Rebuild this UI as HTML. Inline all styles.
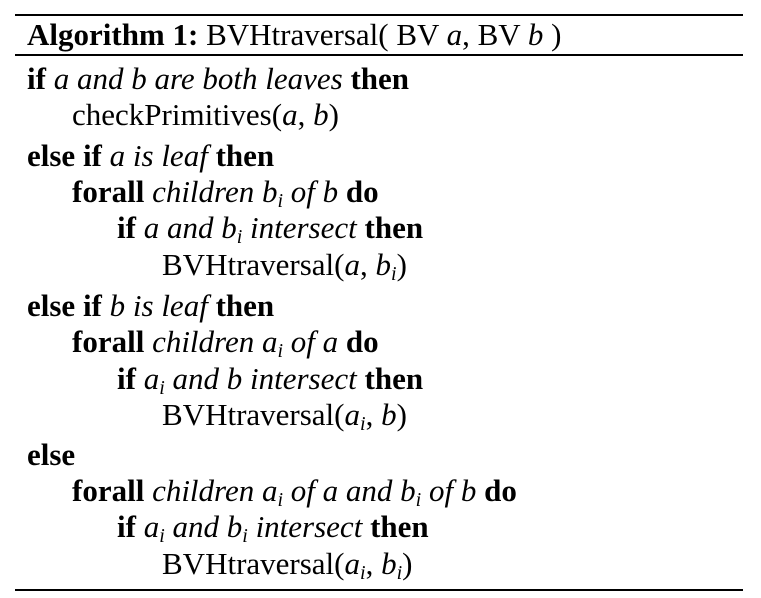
<html><head><style>
body{margin:0;background:#fff;width:761px;height:598px;position:relative;overflow:hidden;font-family:"Liberation Serif",serif;font-size:31px;color:#000}
.r{position:absolute;left:15px;width:728px;background:#000}
.l{position:absolute;line-height:30px;white-space:nowrap}
i{font-style:italic}
sub{font-size:20px;font-style:italic;vertical-align:-5px;line-height:0}
</style></head><body>
<div class="r" style="top:14px;height:2px"></div>
<div class="r" style="top:54px;height:2px"></div>
<div class="r" style="top:589px;height:2px"></div>
<div class="l" style="left:27px;top:20px"><b>Algorithm 1:</b> BVHtraversal( BV <i>a</i>, BV <i>b</i> )</div>
<div class="l" style="left:27px;top:64px"><b>if</b> <i>a and b are both leaves</i> <b>then</b></div>
<div class="l" style="left:72px;top:100px">checkPrimitives(<i>a</i>, <i>b</i>)</div>
<div class="l" style="left:27px;top:141px"><b>else if</b> <i>a is leaf</i> <b>then</b></div>
<div class="l" style="left:72px;top:177px"><b>forall</b> <i>children b<sub>i</sub> of b</i> <b>do</b></div>
<div class="l" style="left:117px;top:213px"><b>if</b> <i>a and b<sub>i</sub> intersect</i> <b>then</b></div>
<div class="l" style="left:162px;top:250px">BVHtraversal(<i>a</i>, <i>b<sub>i</sub></i>)</div>
<div class="l" style="left:27px;top:291px"><b>else if</b> <i>b is leaf</i> <b>then</b></div>
<div class="l" style="left:72px;top:327px"><b>forall</b> <i>children a<sub>i</sub> of a</i> <b>do</b></div>
<div class="l" style="left:117px;top:364px"><b>if</b> <i>a<sub>i</sub> and b intersect</i> <b>then</b></div>
<div class="l" style="left:162px;top:400px">BVHtraversal(<i>a<sub>i</sub></i>, <i>b</i>)</div>
<div class="l" style="left:27px;top:440px"><b>else</b></div>
<div class="l" style="left:72px;top:476px"><b>forall</b> <i>children a<sub>i</sub> of a and b<sub>i</sub> of b</i> <b>do</b></div>
<div class="l" style="left:117px;top:512px"><b>if</b> <i>a<sub>i</sub> and b<sub>i</sub> intersect</i> <b>then</b></div>
<div class="l" style="left:162px;top:549px">BVHtraversal(<i>a<sub>i</sub></i>, <i>b<sub>i</sub></i>)</div>
</body></html>
